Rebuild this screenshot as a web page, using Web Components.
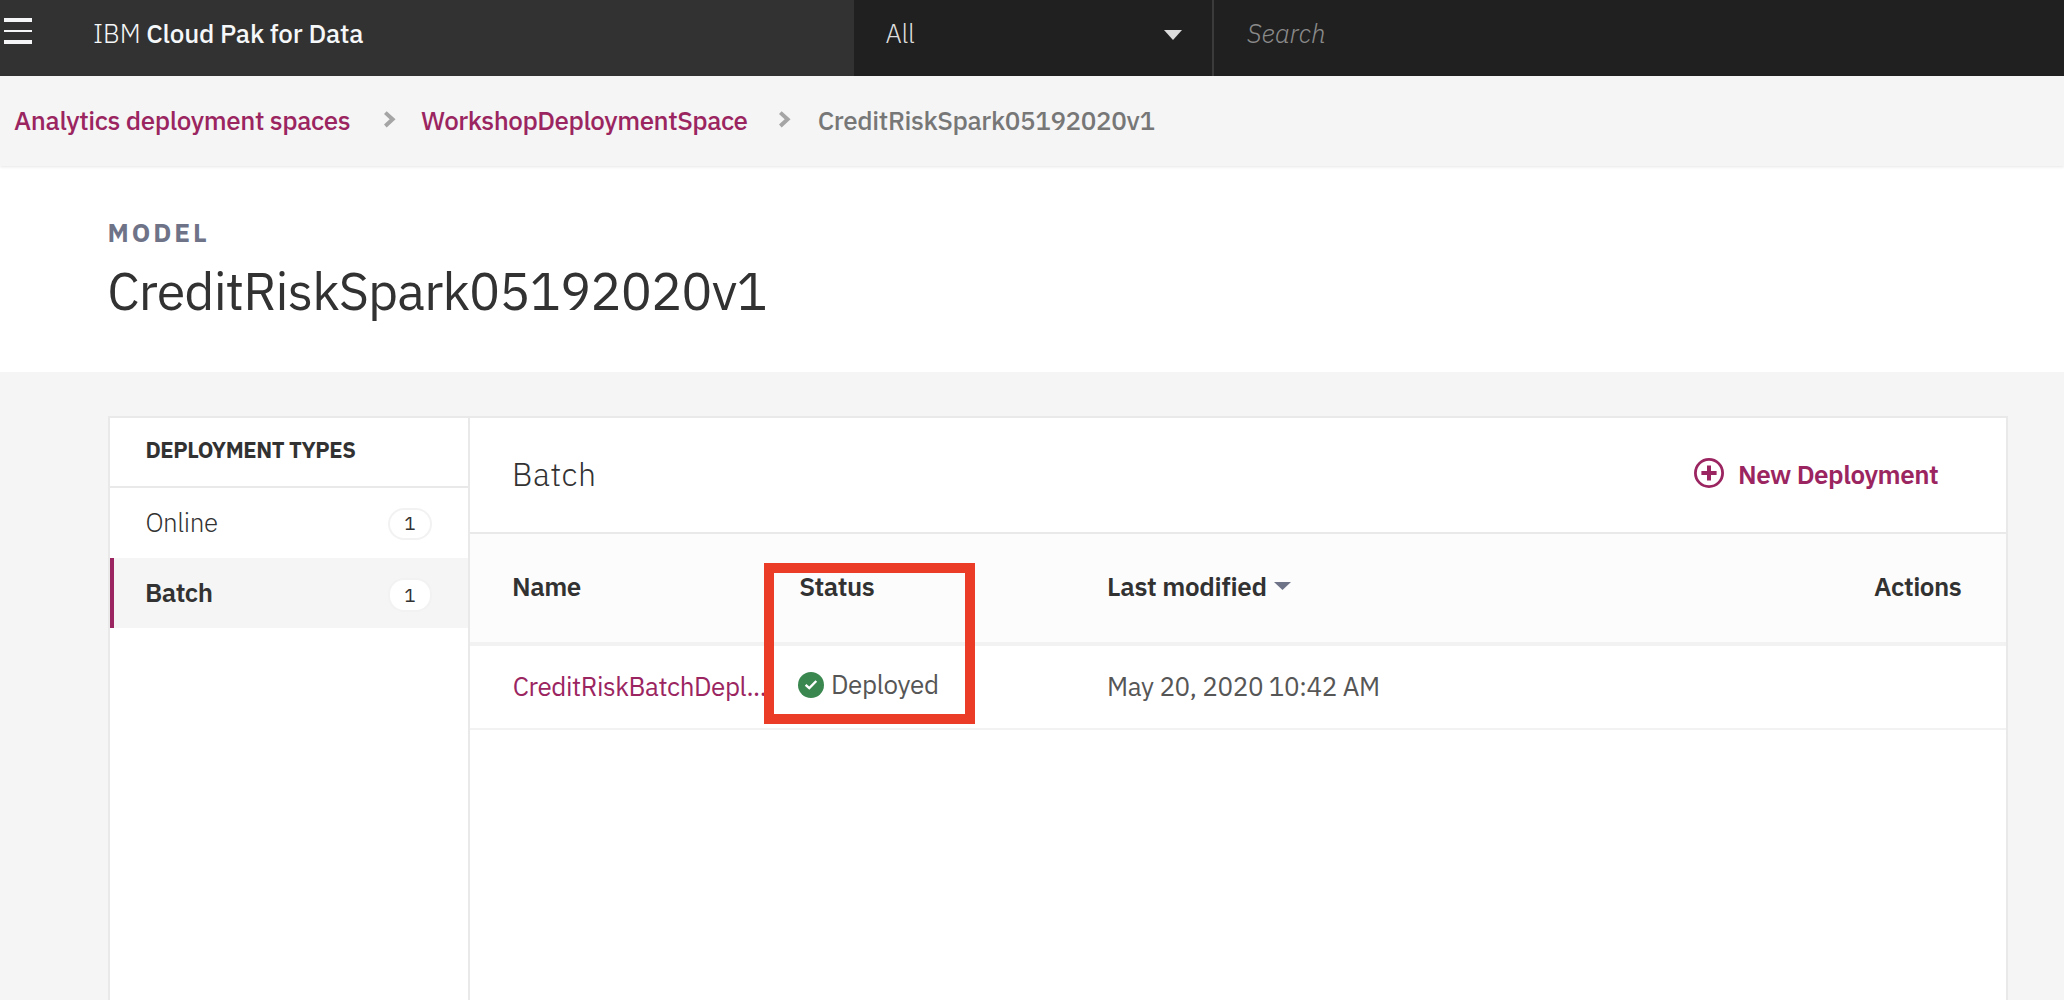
<!DOCTYPE html>
<html lang="en">
<head>
<meta charset="utf-8">
<title>IBM Cloud Pak for Data</title>
<style>
  html, body { margin: 0; height: 100%; overflow: hidden; }
  body { font-family: "IBM Plex Sans", Roboto, "Noto Sans", sans-serif; font-size: 26px; color: #323232; background: #f5f5f5; }
</style>
</head>
<body>
<cpd-app></cpd-app>
<script>
/* Shared base: renders the class template into an open shadow root. */
class Base extends HTMLElement {
  constructor() {
    super();
    const t = document.createElement('template');
    t.innerHTML = this.constructor.html;
    this.attachShadow({ mode: 'open' }).append(t.content.cloneNode(true));
  }
}

/* Label tracked so that its ink spans exactly "w" pixels. */
class CpdLabel extends Base {
  static html = `<style>:host{display:block;white-space:pre;width:var(--w);flex:none}span{display:block}</style><span><slot></slot></span>`;
  connectedCallback() {
    const w = +this.getAttribute('w'), s = getComputedStyle(this), text = this.textContent;
    const c = document.createElement('canvas').getContext('2d');
    /* Measured at ten times the size to keep fractions of a pixel. */
    c.font = `${s.fontStyle} ${s.fontWeight} ${parseFloat(s.fontSize) * 10}px ${s.fontFamily}`;
    const m = c.measureText(text);
    const left = m.actualBoundingBoxLeft / 10;
    const ink = left + m.actualBoundingBoxRight / 10;
    const span = this.shadowRoot.querySelector('span');
    this.style.setProperty('--w', w + 'px');
    if (text.length > 1) span.style.letterSpacing = (w - ink) / (text.length - 1) + 'px';
    span.style.marginLeft = left + 'px';
  }
}
customElements.define('cpd-label', CpdLabel);

class CpdHeader extends Base {
  static html = `<style>
    :host{display:flex;height:76px;background:#202020;line-height:66px}
    .brand{display:flex;width:854px;background:#323232;color:#f5f7f8;box-sizing:border-box;padding-left:4px}
    .brand svg{margin:18px 62.5px 0 0;flex:none}
    .brand b{font-weight:500;margin-left:9px}
    .thin{font-weight:300}
    .scope{display:flex;justify-content:space-between;width:360px;box-sizing:border-box;padding:0 30px 0 32px;border-right:2px solid #3b3b3b;color:#dcdcdc;font-weight:300}
    .scope svg{margin-top:30px}
    .search{padding-left:33px;font-style:italic;font-weight:300;color:#8a8a8a}
  </style>
  <div class="brand">
    <svg width="28" height="26" viewBox="0 0 28 26"><path fill="#f4f6f8" d="M0 0h28v4H0zM0 12h28v2H0zM0 22h28v4H0z"/></svg>
    <cpd-label class="thin" w="44">IBM</cpd-label>
    <b><cpd-label w="215.5">Cloud Pak for Data</cpd-label></b>
  </div>
  <div class="scope"><cpd-label w="28">All</cpd-label><svg width="18" height="10"><path fill="#dcdcdc" d="M0 0h18L9 10z"/></svg></div>
  <div class="search"><cpd-label w="77">Search</cpd-label></div>`;
}
customElements.define('cpd-header', CpdHeader);

class CpdChevron extends Base {
  static html = `<style>:host{display:block;flex:none;width:12px;height:17px;margin-top:35px}svg{display:block}</style>
  <svg width="12" height="17" viewBox="0 0 12 17"><path d="M1.3 1.6L8.6 8.3L1.3 15" fill="none" stroke="#a5a5a5" stroke-width="4"/></svg>`;
}
customElements.define('cpd-chevron', CpdChevron);

class CpdBreadcrumbs extends Base {
  static html = `<style>
    :host{display:flex;height:90px;line-height:88px;background:#f5f5f5;padding-left:14.5px;font-weight:500;color:#9b2560;box-shadow:0 1px 3px rgba(0,0,0,.1);position:relative}
    .at{color:#777}
    cpd-chevron{margin-left:34px;margin-right:26px}
    cpd-chevron.two{margin-left:32px;margin-right:28px}
  </style>
  <cpd-label w="335">Analytics deployment spaces</cpd-label><cpd-chevron></cpd-chevron>
  <cpd-label w="325.5">WorkshopDeploymentSpace</cpd-label><cpd-chevron class="two"></cpd-chevron>
  <cpd-label class="at" w="335">CreditRiskSpark05192020v1</cpd-label>`;
}
customElements.define('cpd-breadcrumbs', CpdBreadcrumbs);

class CpdTitle extends Base {
  static html = `<style>
    :host{display:block;height:206px;background:#fff;box-sizing:border-box;padding:46px 0 0 109px}
    .kind{font-weight:700;line-height:40px;color:#6f7388}
    .name{font-size:52px;line-height:71px;margin:3px 0 0 .7px}
  </style>
  <cpd-label class="kind" w="97">MODEL</cpd-label>
  <cpd-label class="name" w="656">CreditRiskSpark05192020v1</cpd-label>`;
}
customElements.define('cpd-title', CpdTitle);

class CpdType extends Base {
  static html = `<style>
    :host{display:flex;justify-content:space-between;height:70px;line-height:69px;box-sizing:border-box;padding:0 36px 0 37px;font-weight:300}
    :host([selected]){background:#f5f5f5;border-left:4px solid #9b2560;padding-left:33px;font-weight:600}
    .badge{box-sizing:border-box;width:44px;height:32px;margin-top:20px;border:2px solid #f2f2f2;border-radius:16px;background:#fff;text-align:center;font-weight:400;font-size:19px;line-height:27px}
    :host([selected]) .badge{height:34px;line-height:31px}
  </style><slot></slot><span class="badge">1</span>`;
}
customElements.define('cpd-type', CpdType);

class CpdTypes extends Base {
  static html = `<style>
    :host{display:block;width:358px;flex:none;border-right:2px solid #e9e9e9;background:#fff}
    .head{height:68px;line-height:63px;border-bottom:2px solid #e9e9e9;padding-left:37px;font-size:22px;font-weight:700}
  </style>
  <div class="head"><cpd-label w="208">DEPLOYMENT TYPES</cpd-label></div>
  <cpd-type><cpd-label w="70">Online</cpd-label></cpd-type>
  <cpd-type selected><cpd-label w="64.5">Batch</cpd-label></cpd-type>`;
}
customElements.define('cpd-types', CpdTypes);

class CpdTable extends Base {
  static html = `<style>
    :host{display:block}
    .row{display:grid;grid-template-columns:286px 309px 1fr auto;padding:0 45px 0 44px}
    .head{height:108px;line-height:104px;background:#fcfcfc;border-bottom:4px solid #f2f2f2;font-weight:600}
    .body{height:82px;line-height:81px;border-bottom:2px solid #f2f2f2;color:#565656}
    .cell{display:flex}
    .link{color:#9b2560}
    .sort{margin:48px 0 0 9px}
    .ok{margin:26px 9px 0 -2px;flex:none}
    .state{line-height:77px}
  </style>
  <div class="row head">
    <div class="cell"><cpd-label w="66.5">Name</cpd-label></div>
    <div class="cell"><cpd-label w="74">Status</cpd-label></div>
    <div class="cell"><cpd-label w="156">Last modified</cpd-label><svg class="sort" width="17" height="8"><path fill="#6f7388" d="M0 0h17L8.5 8z"/></svg></div>
    <div class="cell"><cpd-label w="86.5">Actions</cpd-label></div>
  </div>
  <div class="row body">
    <div class="cell link"><cpd-label w="251">CreditRiskBatchDepl...</cpd-label></div>
    <div class="cell state"><svg class="ok" width="26" height="26" viewBox="0 0 26 26"><circle cx="13" cy="13" r="13" fill="#3a8750"/><path d="M7.6 12.8l3.7 3.4L18.3 9" fill="none" stroke="#fff" stroke-width="2.4"/></svg><cpd-label w="104">Deployed</cpd-label></div>
    <div class="cell"><cpd-label w="269">May 20, 2020 10:42 AM</cpd-label></div>
    <div></div>
  </div>`;
}
customElements.define('cpd-table', CpdTable);

class CpdPanel extends Base {
  static html = `<style>
    :host{display:block;flex:1;background:#fff}
    .top{display:flex;justify-content:space-between;height:114px;line-height:112px;border-bottom:2px solid #e9e9e9;padding:0 68px 0 45px}
    .title{font-size:32px;font-weight:300}
    .new{display:flex;color:#9b2560;font-weight:600;line-height:113px}
    .new svg{margin:40px 16px 0 0}
  </style>
  <div class="top">
    <cpd-label class="title" w="78.5">Batch</cpd-label>
    <div class="new"><svg width="30" height="30" viewBox="0 0 30 30" fill="none" stroke="#9b2560"><circle cx="15" cy="15" r="13.6" stroke-width="2.8"/><path d="M15 7.4v15.2M7.4 15h15.2" stroke-width="4"/></svg><cpd-label w="198">New Deployment</cpd-label></div>
  </div>
  <cpd-table></cpd-table>`;
}
customElements.define('cpd-panel', CpdPanel);

/* Red annotation frame laid over the table. */
class CpdHighlight extends Base {
  static html = `<style>:host{display:block;position:absolute;left:764px;top:563px;width:211px;height:161px;box-sizing:border-box;border:10px solid #eb3c27}</style>`;
}
customElements.define('cpd-highlight', CpdHighlight);

class CpdApp extends Base {
  static html = `<style>
    :host{display:flex;flex-direction:column;height:1000px;width:2064px;overflow:hidden;position:relative}
    .card{display:flex;flex:1;margin:44px 56px 0 108px;border:2px solid #e9e9e9;border-bottom:0}
    cpd-header,cpd-breadcrumbs,cpd-title{flex:none}
  </style>
  <cpd-header></cpd-header>
  <cpd-breadcrumbs></cpd-breadcrumbs>
  <cpd-title></cpd-title>
  <div class="card"><cpd-types></cpd-types><cpd-panel></cpd-panel></div>
  <cpd-highlight></cpd-highlight>`;
}
customElements.define('cpd-app', CpdApp);
</script>
</body>
</html>
